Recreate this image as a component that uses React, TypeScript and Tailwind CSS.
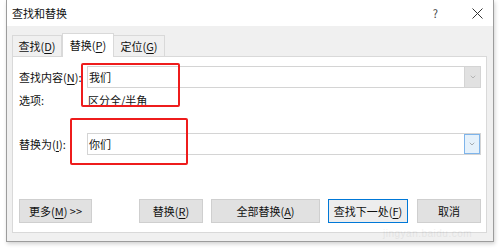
import { ChevronDown } from 'lucide-react';

const font = { fontFamily: '"Noto Sans CJK SC", "Noto Sans", sans-serif' };

function Mn({ children }: { children: string }) {
  // mnemonic letter, underlined like Windows access keys
  return <span className="underline underline-offset-[2px]">{children}</span>;
}

function Combo({ value, focused }: { value: string; focused?: boolean }) {
  return (
    <div className="flex-1 h-[22px] flex border border-[#d4d4d4] bg-white">
      <div className="flex-1 flex items-center pl-[1px] text-[11px] text-[#111]">{value}</div>
      <div
        className={
          focused
            ? 'w-[16px] flex items-center justify-center border border-[#7eb4ea] bg-[#e5f1fb] text-[#666]'
            : 'w-[16px] flex items-center justify-center border-l border-[#d4d4d4] bg-[#e1e1e1] text-[#888]'
        }
      >
        <ChevronDown size={8} strokeWidth={1.5} />
      </div>
    </div>
  );
}

function Btn({ children, width, primary }: { children: React.ReactNode; width: string; primary?: boolean }) {
  return (
    <div
      className={
        (primary
          ? 'border-[#0078d7] bg-[#ededed] '
          : 'border-[#cfcfcf] bg-[#e1e1e1] ') +
        width +
        ' h-[24px] border flex items-center justify-center text-[11px] text-[#111]'
      }
    >
      {children}
    </div>
  );
}

export default function App() {
  return (
    <div className="relative w-[500px] h-[248px] bg-white overflow-hidden" style={font}>
      <div className="ml-[6px] w-[488px] h-[242px] border-x border-b border-[#9c9c9c] bg-[#f0f0f0] shadow-[1px_2px_4px_rgba(0,0,0,0.18)] flex flex-col">
        {/* title bar */}
        <div className="h-[26px] bg-white flex items-center pl-[5px] pr-[10px] text-[11px] text-[#111]">
          <span className="flex-1">查找和替换</span>
          <span className="text-[11px] text-[#444] mr-[34px]">?</span>
          <svg width="11" height="11" viewBox="0 0 11 11" className="text-[#333]">
            <path d="M0.5 0.5 L10.5 10.5 M10.5 0.5 L0.5 10.5" stroke="currentColor" strokeWidth="1" />
          </svg>
        </div>

        {/* tabs */}
        <div className="flex items-end pl-[5px] mt-[7px] h-[23px] text-[11px] text-[#111]">
          <div className="h-[21px] w-[50px] border border-b-0 border-[#d9d9d9] bg-[#f0f0f0] flex items-center justify-center">
            查找(<Mn>D</Mn>)
          </div>
          <div className="h-[24px] w-[52px] border border-b-0 border-[#d9d9d9] bg-white flex items-center justify-center -mb-[1px] relative z-10">
            替换(<Mn>P</Mn>)
          </div>
          <div className="h-[21px] w-[51px] border border-b-0 border-l-0 border-[#d9d9d9] bg-[#f0f0f0] flex items-center justify-center">
            定位(<Mn>G</Mn>)
          </div>
        </div>

        {/* tab panel */}
        <div className="ml-[5px] w-[475px] h-[177px] border border-[#d9d9d9] bg-white pl-[6px] pr-[5px] pt-[9px] text-[11px] text-[#111] flex flex-col">
          <div className="flex items-center h-[22px]">
            <div className="w-[68px]">
              查找内容(<Mn>N</Mn>):
            </div>
            <Combo value="我们" />
          </div>
          <div className="flex items-center h-[22px] mt-[1px]">
            <div className="w-[69px]">选项:</div>
            <div>区分全/半角</div>
          </div>
          <div className="flex items-center h-[22px] mt-[22px]">
            <div className="w-[68px]">
              替换为(<Mn>I</Mn>):
            </div>
            <Combo value="你们" focused />
          </div>

          <div className="flex items-center mt-[44px]">
            <Btn width="w-[73px]">
              更多(<Mn>M</Mn>) &gt;&gt;
            </Btn>
            <div className="ml-[47px]">
              <Btn width="w-[64px]">
                替换(<Mn>R</Mn>)
              </Btn>
            </div>
            <div className="ml-[8px]">
              <Btn width="w-[109px]">
                全部替换(<Mn>A</Mn>)
              </Btn>
            </div>
            <div className="ml-[8px]">
              <Btn width="w-[80px]" primary>
                查找下一处(<Mn>F</Mn>)
              </Btn>
            </div>
            <div className="ml-[9px]">
              <Btn width="w-[64px]">取消</Btn>
            </div>
          </div>
        </div>
      </div>

      {/* red annotation boxes */}
      <div className="absolute left-[81px] top-[63px] w-[99px] h-[44px] border-2 border-[#ee1c1c] rounded-[2px]" />
      <div className="absolute left-[70px] top-[118px] w-[118px] h-[47px] border-2 border-[#ee1c1c] rounded-[2px]" />

      {/* faint watermark */}
      <div className="absolute left-[383px] top-[226px] text-[10px] text-[#000] opacity-[0.05] tracking-[0.5px]" style={{ fontFamily: '"Liberation Sans", sans-serif' }}>
        jingyan.baidu.com
      </div>
    </div>
  );
}
